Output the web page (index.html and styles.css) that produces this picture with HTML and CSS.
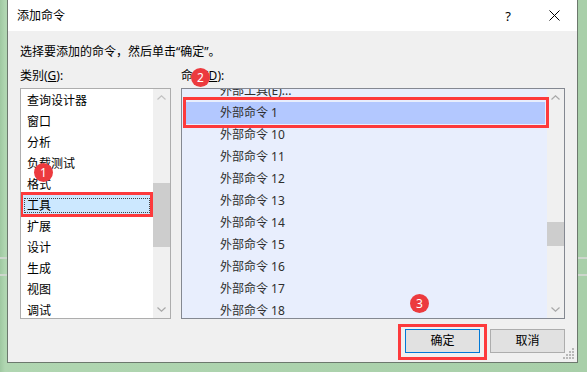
FILE: index.html
```html
<!DOCTYPE html>
<html lang="zh-CN">
<head>
<meta charset="utf-8">
<title>添加命令</title>
<link rel="stylesheet" href="styles.css">
</head>
<body>
<div class="dialog">
  <div class="titlebar">
    <span class="title">添加命令</span>
    <div class="tb-btns">
      <span class="tb-btn help">?</span>
      <span class="tb-btn close"><svg width="11" height="11" viewBox="0 0 11 11"><path d="M0.5 0.5 L10.5 10.5 M10.5 0.5 L0.5 10.5" stroke="#000" stroke-width="1" fill="none"/></svg></span>
    </div>
  </div>
  <div class="body">
    <p class="intro">选择要添加的命令，然后单击“确定”。</p>
    <div class="cols">
      <div class="col col-left">
        <div class="label">类别(<u>G</u>):</div>
        <div class="listbox lb-left">
          <ul class="items">
            <li>查询设计器</li>
            <li>窗口</li>
            <li>分析</li>
            <li>负载测试</li>
            <li>格式</li>
            <li class="sel">工具</li>
            <li>扩展</li>
            <li>设计</li>
            <li>生成</li>
            <li>视图</li>
            <li>调试</li>
          </ul>
          <div class="sb">
            <div class="sb-btn"><svg width="9" height="5" viewBox="0 0 9 5"><path d="M0.5 4.5 L4.5 0.8 L8.5 4.5" stroke="#c2c2c2" stroke-width="1.2" fill="none"/></svg></div>
            <div class="sb-track"><div class="sb-thumb thumb-left"></div></div>
            <div class="sb-btn"><svg width="9" height="5" viewBox="0 0 9 5"><path d="M0.5 0.5 L4.5 4.2 L8.5 0.5" stroke="#a8a8a8" stroke-width="1.2" fill="none"/></svg></div>
          </div>
        </div>
      </div>
      <div class="col col-right">
        <div class="label">命令(<u>D</u>):</div>
        <div class="listbox lb-right">
          <ul class="items">
            <li>外部工具(E)...</li>
            <li class="sel">外部命令 1</li>
            <li>外部命令 10</li>
            <li>外部命令 11</li>
            <li>外部命令 12</li>
            <li>外部命令 13</li>
            <li>外部命令 14</li>
            <li>外部命令 15</li>
            <li>外部命令 16</li>
            <li>外部命令 17</li>
            <li>外部命令 18</li>
          </ul>
          <div class="sb">
            <div class="sb-btn"><svg width="9" height="5" viewBox="0 0 9 5"><path d="M0.5 4.5 L4.5 0.8 L8.5 4.5" stroke="#a8a8a8" stroke-width="1.2" fill="none"/></svg></div>
            <div class="sb-track"><div class="sb-thumb thumb-right"></div></div>
            <div class="sb-btn"><svg width="9" height="5" viewBox="0 0 9 5"><path d="M0.5 0.5 L4.5 4.2 L8.5 0.5" stroke="#a8a8a8" stroke-width="1.2" fill="none"/></svg></div>
          </div>
        </div>
      </div>
    </div>
    <div class="footer">
      <button class="btn default">确定</button>
      <button class="btn">取消</button>
    </div>
  </div>
  <span class="badge b1">1</span>
  <span class="badge b2">2</span>
  <span class="badge b3">3</span>
  <svg class="grip" width="12" height="12" viewBox="0 0 12 12">
    <g fill="#b8b8b8">
      <rect x="9" y="0" width="2" height="2"/>
      <rect x="6" y="3" width="2" height="2"/><rect x="9" y="3" width="2" height="2"/>
      <rect x="3" y="6" width="2" height="2"/><rect x="6" y="6" width="2" height="2"/><rect x="9" y="6" width="2" height="2"/>
      <rect x="0" y="9" width="2" height="2"/><rect x="3" y="9" width="2" height="2"/><rect x="6" y="9" width="2" height="2"/><rect x="9" y="9" width="2" height="2"/>
    </g>
  </svg>
</div>
</body>
</html>
```

FILE: styles.css
```css
html, body {
  margin: 0;
  padding: 0;
}
body {
  width: 587px;
  height: 372px;
  overflow: hidden;
  font-family: "Noto Sans", "Noto Sans CJK SC", sans-serif;
  font-size: 12px;
  color: #000;
  background:
    linear-gradient(to bottom,
      transparent 257px, #cdd6cd 257px, #cdd6cd 259px, transparent 259px,
      transparent 274px, #cdd6cd 274px, #cdd6cd 276px, transparent 276px),
    linear-gradient(to right, #9fc8a1, #b0d6b1 5px, #a8cfa9);
}
.dialog {
  position: relative;
  margin-left: 7px;
  width: 571px;
  height: 363px;
  box-sizing: border-box;
  border: 1px solid #6c786d;
  border-top: 0;
  background: #f0f0f0;
  display: flex;
  flex-direction: column;
}
.titlebar {
  height: 31px;
  flex: none;
  background: #fff;
  display: flex;
  align-items: center;
  justify-content: space-between;
  padding-left: 9px;
}
.title {
  line-height: 16px;
}
.tb-btns {
  display: flex;
  align-self: stretch;
}
.tb-btn {
  width: 46px;
  display: flex;
  align-items: center;
  justify-content: center;
}
.help {
  font-size: 13px;
}
.body {
  flex: 1;
  padding: 13px 12px 9px;
  display: flex;
  flex-direction: column;
}
.intro {
  margin: 0;
  height: 16px;
  line-height: 16px;
}
.cols {
  display: flex;
  gap: 10px;
  margin-top: 8px;
}
.col-left { width: 151px; }
.col-right { width: 384px; }
.label {
  height: 16px;
  line-height: 16px;
  margin-bottom: 4px;
}
.listbox {
  height: 231px;
  box-sizing: border-box;
  display: flex;
  overflow: hidden;
}
.lb-left {
  border: 1px solid #adadad;
  background: #fff;
}
.lb-right {
  border: 1px solid #848891;
  background: #e8eefd;
}
.items {
  flex: 1;
  list-style: none;
  margin: 0;
  padding: 0;
}
.lb-left .items {
  padding-top: 1px;
}
.lb-left li {
  height: 21px;
  line-height: 21px;
  padding-left: 6px;
  white-space: nowrap;
}
.lb-left li.sel {
  position: relative;
  background: #cce8ff;
  outline: 1px dotted #444;
  outline-offset: -4px;
}
.lb-left li.sel::after {
  content: "";
  position: absolute;
  left: -1px;
  right: 0;
  top: -3px;
  bottom: -1px;
  border: 3px solid #fd3a3c;
}
.lb-right .items {
  margin-top: -9px;
}
.lb-right li {
  height: 22px;
  line-height: 22px;
  padding-left: 38px;
  color: #2e2e2e;
  white-space: nowrap;
}
.lb-right li.sel {
  position: relative;
  background: #b3c8ff;
  margin: 0 2px 0 3px;
  padding-left: 35px;
}
.lb-right li.sel::after {
  content: "";
  position: absolute;
  left: -2px;
  right: -4px;
  top: -5px;
  bottom: -4px;
  border: 3px solid #fd3a3c;
}
.sb {
  width: 17px;
  flex: none;
  background: #f0f0f0;
  display: flex;
  flex-direction: column;
}
.sb-btn {
  height: 17px;
  display: flex;
  align-items: center;
  justify-content: center;
}
.sb-track {
  flex: 1;
}
.sb-thumb {
  background: #cdcdcd;
}
.thumb-left {
  margin-top: 77px;
  height: 64px;
}
.thumb-right {
  margin-top: 116px;
  height: 24px;
}
.footer {
  display: flex;
  justify-content: flex-end;
  gap: 10px;
  margin-top: 10px;
}
.btn {
  width: 75px;
  height: 24px;
  box-sizing: border-box;
  border: 1px solid #adadad;
  background: #e1e1e1;
  font: inherit;
  color: #000;
  padding: 0;
  line-height: 22px;
  text-align: center;
}
.btn.default {
  position: relative;
  border-color: #0078d7;
}
.btn.default::after {
  content: "";
  position: absolute;
  left: -8px;
  right: -8px;
  top: -6px;
  bottom: -8px;
  border: 3px solid #fd3a3c;
}
.badge {
  position: absolute;
  width: 19px;
  height: 19px;
  border-radius: 50%;
  background: #ec3a3e;
  color: #fff;
  font-size: 12px;
  line-height: 19px;
  text-align: center;
}
.b1 { left: 26px; top: 163px; }
.b2 { left: 183px; top: 68px; }
.b3 { left: 402px; top: 294px; }
.grip {
  position: absolute;
  right: 2px;
  bottom: 2px;
}
```
